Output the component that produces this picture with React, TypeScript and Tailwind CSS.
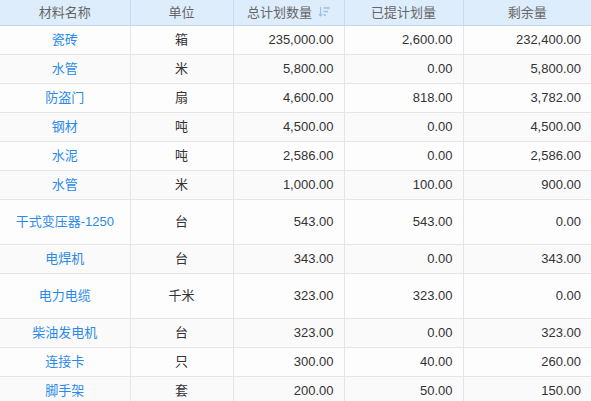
import React from 'react'

type Row = { name: string; unit: string; total: string; done: string; left: string; tall?: boolean }

const ROWS: Row[] = [
  { name: '瓷砖', unit: '箱', total: '235,000.00', done: '2,600.00', left: '232,400.00' },
  { name: '水管', unit: '米', total: '5,800.00', done: '0.00', left: '5,800.00' },
  { name: '防盗门', unit: '扇', total: '4,600.00', done: '818.00', left: '3,782.00' },
  { name: '钢材', unit: '吨', total: '4,500.00', done: '0.00', left: '4,500.00' },
  { name: '水泥', unit: '吨', total: '2,586.00', done: '0.00', left: '2,586.00' },
  { name: '水管', unit: '米', total: '1,000.00', done: '100.00', left: '900.00' },
  { name: '干式变压器-1250', unit: '台', total: '543.00', done: '543.00', left: '0.00', tall: true },
  { name: '电焊机', unit: '台', total: '343.00', done: '0.00', left: '343.00' },
  { name: '电力电缆', unit: '千米', total: '323.00', done: '323.00', left: '0.00', tall: true },
  { name: '柴油发电机', unit: '台', total: '323.00', done: '0.00', left: '323.00' },
  { name: '连接卡', unit: '只', total: '300.00', done: '40.00', left: '260.00' },
  { name: '脚手架', unit: '套', total: '200.00', done: '50.00', left: '150.00' },
]

function SortIcon() {
  return (
    <svg width="12" height="12" viewBox="0 0 12 12" className="ml-1.5 inline-block">
      <path d="M2.5 1v9M0.8 8.2l1.7 1.8 1.7-1.8" stroke="#9fbfe0" strokeWidth="1.2" fill="none" />
      <path d="M5.5 2h6M5.5 5.5h4.5M5.5 9h2.5" stroke="#9fbfe0" strokeWidth="1.3" fill="none" />
    </svg>
  )
}

export default function App() {
  const th = 'h-[25px] border-r border-[#c9dcef] border-b border-b-[#c6d9ec] text-center font-normal text-[#666]'
  const td = 'border-r border-b border-[#e5e5e8]'
  return (
    <div className="w-[591px] h-[401px] overflow-hidden bg-white" style={{ fontFamily: '"Liberation Sans", "Noto Sans CJK SC", sans-serif' }}>
      <table className="w-[591px] table-fixed border-collapse text-[13px]">
        <colgroup>
          <col className="w-[130px]" />
          <col className="w-[103px]" />
          <col className="w-[111px]" />
          <col className="w-[119px]" />
          <col className="w-[128px]" />
        </colgroup>
        <thead>
          <tr className="bg-[#deedfb]">
            <th className={th}>材料名称</th>
            <th className={th}>单位</th>
            <th className={th}>
              <span className="inline-flex items-center">总计划数量<SortIcon /></span>
            </th>
            <th className={th}>已提计划量</th>
            <th className={th + ' border-r-0'}>剩余量</th>
          </tr>
        </thead>
        <tbody>
          {ROWS.map((r, i) => (
            <tr key={i} className={`${r.tall ? 'h-[45px]' : 'h-[29px]'} ${i % 2 ? 'bg-[#fafafb]' : 'bg-[#fdfdfe]'}`}>
              <td className={`${td} text-center text-[#2b8ae8]`}>{r.name}</td>
              <td className={`${td} text-center text-[#333]`}>{r.unit}</td>
              <td className={`${td} text-right pr-[10px] text-[#333]`}>{r.total}</td>
              <td className={`${td} text-right pr-[10px] text-[#333]`}>{r.done}</td>
              <td className={`${td} border-r-0 text-right pr-[10px] text-[#333]`}>{r.left}</td>
            </tr>
          ))}
        </tbody>
      </table>
    </div>
  )
}
